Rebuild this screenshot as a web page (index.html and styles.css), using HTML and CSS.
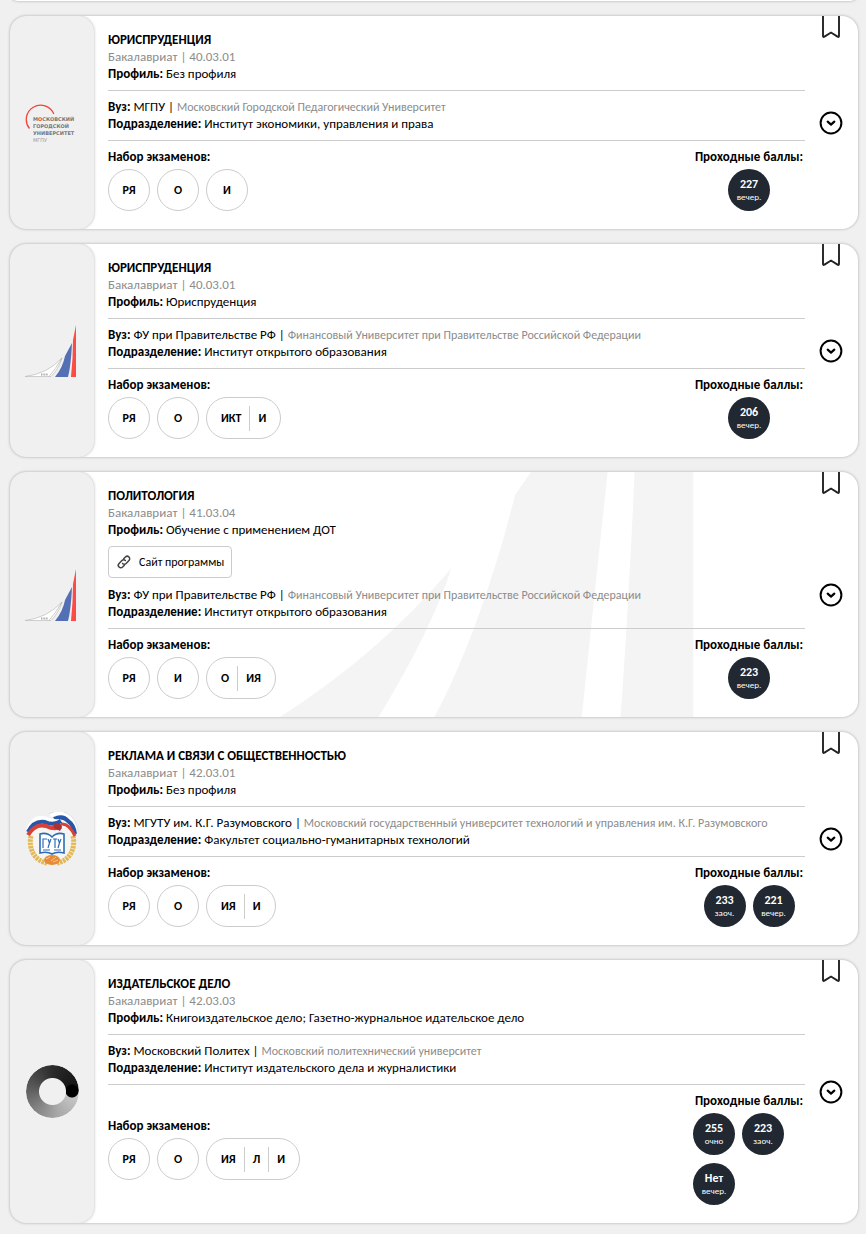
FILE: index.html
```html
<!DOCTYPE html>
<html lang="ru">
<head>
    <meta charset="UTF-8">
    <meta name="viewport" content="width=device-width, initial-scale=1.0">
    <title>Программы обучения</title>
    <link rel="stylesheet" href="styles.css">
</head>
<body>
    <!-- Shared icons -->
    <svg class="sprite" aria-hidden="true">
        <symbol id="bookmark" viewBox="0 0 20 24">
            <path d="M2 -4V19.800Q2 21.800 3.500 20.600L10 16.500L16.500 20.600Q18 21.800 18 19.800V-4" fill="none" stroke="#222" stroke-width="1.900"/>
        </symbol>
        <symbol id="arrow" viewBox="0 0 24 24">
            <circle cx="12" cy="12" r="10.400" fill="none" stroke="#000" stroke-width="2"/>
            <path d="M8.700 10.700L12 13.600L15.300 10.700" fill="none" stroke="#000" stroke-width="2.200" stroke-linecap="round" stroke-linejoin="round"/>
        </symbol>
        <symbol id="logo-fu" viewBox="0 0 54 54">
            <path d="M0 52.500Q22 50 37 34Q33 46 26 52.500Z" fill="#fff" stroke="#bbb" stroke-width=".7"/>
            <path d="M37 34Q30 46 24 52.500" fill="none" stroke="#aaa" stroke-width=".6"/>
            <path d="M16 50.500h7" stroke="#aaa" stroke-width="2" stroke-dasharray="1 .6"/>
            <path d="M30 53Q38 43 40 32L47 19Q46 42 43 53Z" fill="#5470b5"/>
            <path d="M46 53Q48 34 48 16L51 1V53Z" fill="#fb4d46"/>
        </symbol>
    </svg>

    <main class="list">
        <article class="card card-prev"></article>

        <article class="card">
            <div class="logo">
                <svg viewBox="0 0 54 54" role="img" aria-label="МГПУ">
                    <path d="M4.500 32.500A14.300 14.300 0 1 1 28.800 18" fill="none" stroke="#f04438" stroke-width="1.300"/>
                    <g class="logo-text">
                        <text x="8" y="25">М<tspan fill="#f04438">О</tspan>СКОВСКИЙ</text>
                        <text x="8" y="32">ГОРОДСКОЙ</text>
                        <text x="8" y="39">УНИВЕРСИТЕТ</text>
                        <text x="8" y="46" class="logo-light">МГПУ</text>
                    </g>
                </svg>
            </div>
            <div class="info">
                <h2>ЮРИСПРУДЕНЦИЯ</h2>
                <p class="level">Бакалавриат | 40.03.01</p>
                <p><b>Профиль:</b> Без профиля</p>
                <hr>
                <p><b>Вуз:</b> МГПУ | <span class="full-name">Московский Городской Педагогический Университет</span></p>
                <p><b>Подразделение:</b> Институт экономики, управления и права</p>
                <hr>
                <div class="bottom">
                    <div class="exams">
                        <h3>Набор экзаменов:</h3>
                        <ul class="row">
                            <li class="exam"><span>РЯ</span></li>
                            <li class="exam"><span>О</span></li>
                            <li class="exam"><span>И</span></li>
                        </ul>
                    </div>
                    <div class="scores">
                        <h3>Проходные баллы:</h3>
                        <ul class="row">
                            <li class="score"><b>227</b><small>вечер.</small></li>
                        </ul>
                    </div>
                </div>
            </div>
            <div class="actions">
                <button type="button" class="bookmark" aria-label="В закладки"><svg><use href="#bookmark"/></svg></button>
                <button type="button" class="more" aria-label="Подробнее"><svg><use href="#arrow"/></svg></button>
            </div>
        </article>

        <article class="card">
            <div class="logo"><svg role="img" aria-label="Финансовый Университет"><use href="#logo-fu"/></svg></div>
            <div class="info">
                <h2>ЮРИСПРУДЕНЦИЯ</h2>
                <p class="level">Бакалавриат | 40.03.01</p>
                <p><b>Профиль:</b> Юриспруденция</p>
                <hr>
                <p><b>Вуз:</b> ФУ при Правительстве РФ | <span class="full-name">Финансовый Университет при Правительстве Российской Федерации</span></p>
                <p><b>Подразделение:</b> Институт открытого образования</p>
                <hr>
                <div class="bottom">
                    <div class="exams">
                        <h3>Набор экзаменов:</h3>
                        <ul class="row">
                            <li class="exam"><span>РЯ</span></li>
                            <li class="exam"><span>О</span></li>
                            <li class="exam"><span>ИКТ</span><span>И</span></li>
                        </ul>
                    </div>
                    <div class="scores">
                        <h3>Проходные баллы:</h3>
                        <ul class="row">
                            <li class="score"><b>206</b><small>вечер.</small></li>
                        </ul>
                    </div>
                </div>
            </div>
            <div class="actions">
                <button type="button" class="bookmark" aria-label="В закладки"><svg><use href="#bookmark"/></svg></button>
                <button type="button" class="more" aria-label="Подробнее"><svg><use href="#arrow"/></svg></button>
            </div>
        </article>

        <article class="card">
            <!-- Large pale logo behind the text -->
            <svg class="watermark" viewBox="0 0 416 246" aria-hidden="true">
                <path d="M0 246Q98 184 172 97Q152 159 99 246Z"/>
                <path d="M155 246C187 187 216 103 236 23L252 0H329Q315 130 303 246Z"/>
                <path d="M342 246Q351 120 356 0H415V246Z"/>
            </svg>
            <div class="logo"><svg role="img" aria-label="Финансовый Университет"><use href="#logo-fu"/></svg></div>
            <div class="info">
                <h2>ПОЛИТОЛОГИЯ</h2>
                <p class="level">Бакалавриат | 41.03.04</p>
                <p><b>Профиль:</b> Обучение с применением ДОТ</p>
                <a class="site" href="#">
                    <svg viewBox="0 0 16 16" aria-hidden="true">
                        <g transform="rotate(-45 8 8)" fill="none" stroke="#444" stroke-width="1.500" stroke-linecap="round">
                            <path d="M6 10.500H3.500A2.500 2.500 0 0 1 3.500 5.500H7.500A2.500 2.500 0 0 1 10 8"/>
                            <path d="M6 8A2.500 2.500 0 0 0 8.500 10.500H12.500A2.500 2.500 0 0 0 12.500 5.500H10"/>
                        </g>
                    </svg>
                    Сайт программы
                </a>
                <p><b>Вуз:</b> ФУ при Правительстве РФ | <span class="full-name">Финансовый Университет при Правительстве Российской Федерации</span></p>
                <p><b>Подразделение:</b> Институт открытого образования</p>
                <hr>
                <div class="bottom">
                    <div class="exams">
                        <h3>Набор экзаменов:</h3>
                        <ul class="row">
                            <li class="exam"><span>РЯ</span></li>
                            <li class="exam"><span>И</span></li>
                            <li class="exam"><span>О</span><span>ИЯ</span></li>
                        </ul>
                    </div>
                    <div class="scores">
                        <h3>Проходные баллы:</h3>
                        <ul class="row">
                            <li class="score"><b>223</b><small>вечер.</small></li>
                        </ul>
                    </div>
                </div>
            </div>
            <div class="actions">
                <button type="button" class="bookmark" aria-label="В закладки"><svg><use href="#bookmark"/></svg></button>
                <button type="button" class="more" aria-label="Подробнее"><svg><use href="#arrow"/></svg></button>
            </div>
        </article>

        <article class="card">
            <div class="logo">
                <svg viewBox="0 0 54 54" role="img" aria-label="МГУТУ">
                    <circle cx="27" cy="28" r="23" fill="#f6f5f2"/>
                    <!-- wheat -->
                    <g fill="none" stroke="#e3b857" stroke-width="5" stroke-dasharray="2.500 .8">
                        <path d="M6 24C3 37 10 49 22 51"/>
                        <path d="M48 24C51 37 44 49 32 51"/>
                    </g>
                    <!-- ribbon -->
                    <g fill="none">
                        <path d="M25 4Q34 -1 42 4Q50 9 51 20" stroke="#ccd0e0" stroke-width="5"/>
                        <path d="M25 4Q34 -1 42 4Q50 9 51 20" stroke="#fff" stroke-width="4"/>
                        <path d="M29 7Q38 3 43 9Q49 13 50 22" stroke="#2857a8" stroke-width="4"/>
                        <path d="M36 12Q44 11 50 24" stroke="#d8403a" stroke-width="3"/>
                        <path d="M3 18Q8 4 19 6Q27 10 34 9" stroke="#fff" stroke-width="4"/>
                        <path d="M3 20Q9 8 20 10Q29 14 36 9" stroke="#2857a8" stroke-width="4"/>
                        <path d="M3 23Q10 11 21 14Q29 18 36 15" stroke="#d8403a" stroke-width="4"/>
                    </g>
                    <path d="M28 12Q36 9 37 15L35 19L29 16Z" fill="#a83238"/>
                    <!-- book -->
                    <path d="M15 22Q22 20 27 25Q32 20 39 22V41Q32 39 27 42Q22 39 15 41Z" fill="#fff" stroke="#2d6cb5" stroke-width="1.600"/>
                    <path d="M18 36V27H22M23 27L24.500 31L26 27M24.500 31L23 36M28 27H32M30 27V36M33 27L34.500 31L36 27M34.500 31L33 36M18 38H25M29 38H36" fill="none" stroke="#2d6cb5" stroke-width="1.200"/>
                    <ellipse cx="27" cy="48" rx="8" ry="5" fill="#e78b38"/>
                    <path d="M21 47L25 45M26 49L31 45M28 50L33 48" stroke="#f7c78d" stroke-width="1"/>
                </svg>
            </div>
            <div class="info">
                <h2>РЕКЛАМА И СВЯЗИ С ОБЩЕСТВЕННОСТЬЮ</h2>
                <p class="level">Бакалавриат | 42.03.01</p>
                <p><b>Профиль:</b> Без профиля</p>
                <hr>
                <p><b>Вуз:</b> МГУТУ им. К.Г. Разумовского | <span class="full-name">Московский государственный университет технологий и управления им. К.Г. Разумовского</span></p>
                <p><b>Подразделение:</b> Факультет социально-гуманитарных технологий</p>
                <hr>
                <div class="bottom">
                    <div class="exams">
                        <h3>Набор экзаменов:</h3>
                        <ul class="row">
                            <li class="exam"><span>РЯ</span></li>
                            <li class="exam"><span>О</span></li>
                            <li class="exam"><span>ИЯ</span><span>И</span></li>
                        </ul>
                    </div>
                    <div class="scores">
                        <h3>Проходные баллы:</h3>
                        <ul class="row">
                            <li class="score"><b>233</b><small>заоч.</small></li>
                            <li class="score"><b>221</b><small>вечер.</small></li>
                        </ul>
                    </div>
                </div>
            </div>
            <div class="actions">
                <button type="button" class="bookmark" aria-label="В закладки"><svg><use href="#bookmark"/></svg></button>
                <button type="button" class="more" aria-label="Подробнее"><svg><use href="#arrow"/></svg></button>
            </div>
        </article>

        <article class="card">
            <div class="logo"><div class="ring" role="img" aria-label="Московский Политех"></div></div>
            <div class="info">
                <h2>ИЗДАТЕЛЬСКОЕ ДЕЛО</h2>
                <p class="level">Бакалавриат | 42.03.03</p>
                <p><b>Профиль:</b> Книгоиздательское дело; Газетно-журнальное идательское дело</p>
                <hr>
                <p><b>Вуз:</b> Московский Политех | <span class="full-name">Московский политехнический университет</span></p>
                <p><b>Подразделение:</b> Институт издательского дела и журналистики</p>
                <hr>
                <div class="bottom">
                    <div class="exams">
                        <h3>Набор экзаменов:</h3>
                        <ul class="row">
                            <li class="exam"><span>РЯ</span></li>
                            <li class="exam"><span>О</span></li>
                            <li class="exam"><span>ИЯ</span><span>Л</span><span>И</span></li>
                        </ul>
                    </div>
                    <div class="scores">
                        <h3>Проходные баллы:</h3>
                        <ul class="row">
                            <li class="score"><b>255</b><small>очно</small></li>
                            <li class="score"><b>223</b><small>заоч.</small></li>
                            <li class="score"><b>Нет</b><small>вечер.</small></li>
                        </ul>
                    </div>
                </div>
            </div>
            <div class="actions">
                <button type="button" class="bookmark" aria-label="В закладки"><svg><use href="#bookmark"/></svg></button>
                <button type="button" class="more" aria-label="Подробнее"><svg><use href="#arrow"/></svg></button>
            </div>
        </article>
    </main>
</body>
</html>
```
FILE: styles.css
```css
* {
    box-sizing: border-box;
}

body {
    margin: 0;
    background-color: #f0f0f0;
    font-family: Carlito, Lato, "Open Sans", sans-serif;
    font-size: 13px;
    line-height: 17px;
    color: #000;
}

h2, h3, p, ul {
    margin: 0;
    padding: 0;
    font-size: inherit;
}

h2, h3, b {
    font-weight: 600;
}

.sprite {
    position: absolute;
    width: 0;
    height: 0;
}

.list {
    display: flex;
    flex-direction: column;
    gap: 15px;
    padding: 0 8px 10px 10px;
}

.card {
    position: relative;
    display: flex;
    background: #fff;
    border-radius: 16px;
    box-shadow: 0 0 3px rgba(0, 0, 0, 0.3);
    overflow: hidden;
}

/* Tail of the card scrolled out of view */
.card-prev {
    height: 16px;
    margin-top: -15px;
}

.logo {
    display: flex;
    align-items: center;
    justify-content: center;
    width: 84px;
    background: #f0f0f0;
    border-radius: 16px;
    box-shadow: 0 0 3px rgba(0, 0, 0, 0.3);
    flex-shrink: 0;
}

.logo svg {
    width: 54px;
    height: 54px;
}

.logo-text {
    font-family: "DejaVu Sans", sans-serif;
    font-size: 5px;
    font-weight: 700;
    fill: #777;
}

.logo-light {
    font-weight: 400;
    fill: #999;
}

/* Gradient ring logo */
.ring {
    width: 53px;
    height: 53px;
    border-radius: 50%;
    background:
        radial-gradient(circle at 46px 26px, #000 6px, transparent 7px),
        conic-gradient(from 90deg, #ccc, #aaa 20%, #888 35%, #555 55%, #2b2b2b 75%, #111);
    -webkit-mask: radial-gradient(circle, transparent 13px, #000 14px);
    mask: radial-gradient(circle, transparent 13px, #000 14px);
}

.info {
    position: relative;
    flex: 1;
    min-width: 0;
    padding: 15px 0 18px 14px;
}

.level,
.full-name {
    color: #8c8c8c;
}

.full-name {
    font-size: 12px;
    line-height: 1;
}

hr {
    height: 1px;
    margin: 8px 0 7px;
    border: none;
    background: #ccc;
}

.site {
    display: flex;
    align-items: center;
    gap: 7px;
    width: fit-content;
    height: 32px;
    margin: 8px 0;
    padding: 0 7px;
    border: 1px solid #ccc;
    border-radius: 4px;
    background: #fff;
    color: #000;
    font-size: 12px;
    text-decoration: none;
}

.site svg {
    width: 16px;
    height: 16px;
}

.bottom {
    display: flex;
    align-items: center;
    justify-content: space-between;
}

.row {
    display: inline-flex;
    flex-wrap: wrap;
    gap: 8px 7px;
    margin-top: 4px;
    list-style: none;
    vertical-align: top;
}

.exam {
    display: flex;
    align-items: center;
    justify-content: center;
    min-width: 42px;
    height: 42px;
    padding: 0 6px;
    border: 1px solid #ccc;
    border-radius: 21px;
    background: #fff;
    font-size: 12px;
    font-weight: 600;
}

.exam span {
    padding: 4px 8px;
}

.exam span:only-child {
    padding: 0;
}

.exam span + span {
    border-left: 1px solid #ccc;
}

.scores {
    width: 112px;
    text-align: center;
}

.scores h3 {
    white-space: nowrap;
}

.score {
    display: flex;
    flex-direction: column;
    align-items: center;
    justify-content: center;
    width: 42px;
    height: 42px;
    border-radius: 50%;
    background: #212832;
    color: #fff;
    font-size: 12px;
    line-height: 14px;
}

.score small {
    font-size: 9px;
    line-height: 12px;
}

.actions {
    display: flex;
    align-items: center;
    width: 53px;
    padding-left: 14px;
    flex-shrink: 0;
}

.actions button {
    padding: 0;
    border: none;
    background: none;
    cursor: pointer;
}

.actions svg {
    display: block;
    width: 24px;
    height: 24px;
}

.bookmark {
    position: absolute;
    top: 0;
    right: 15px;
}

.watermark {
    position: absolute;
    top: 0;
    left: 270px;
    height: 100%;
    fill: #f4f4f4;
}
```
